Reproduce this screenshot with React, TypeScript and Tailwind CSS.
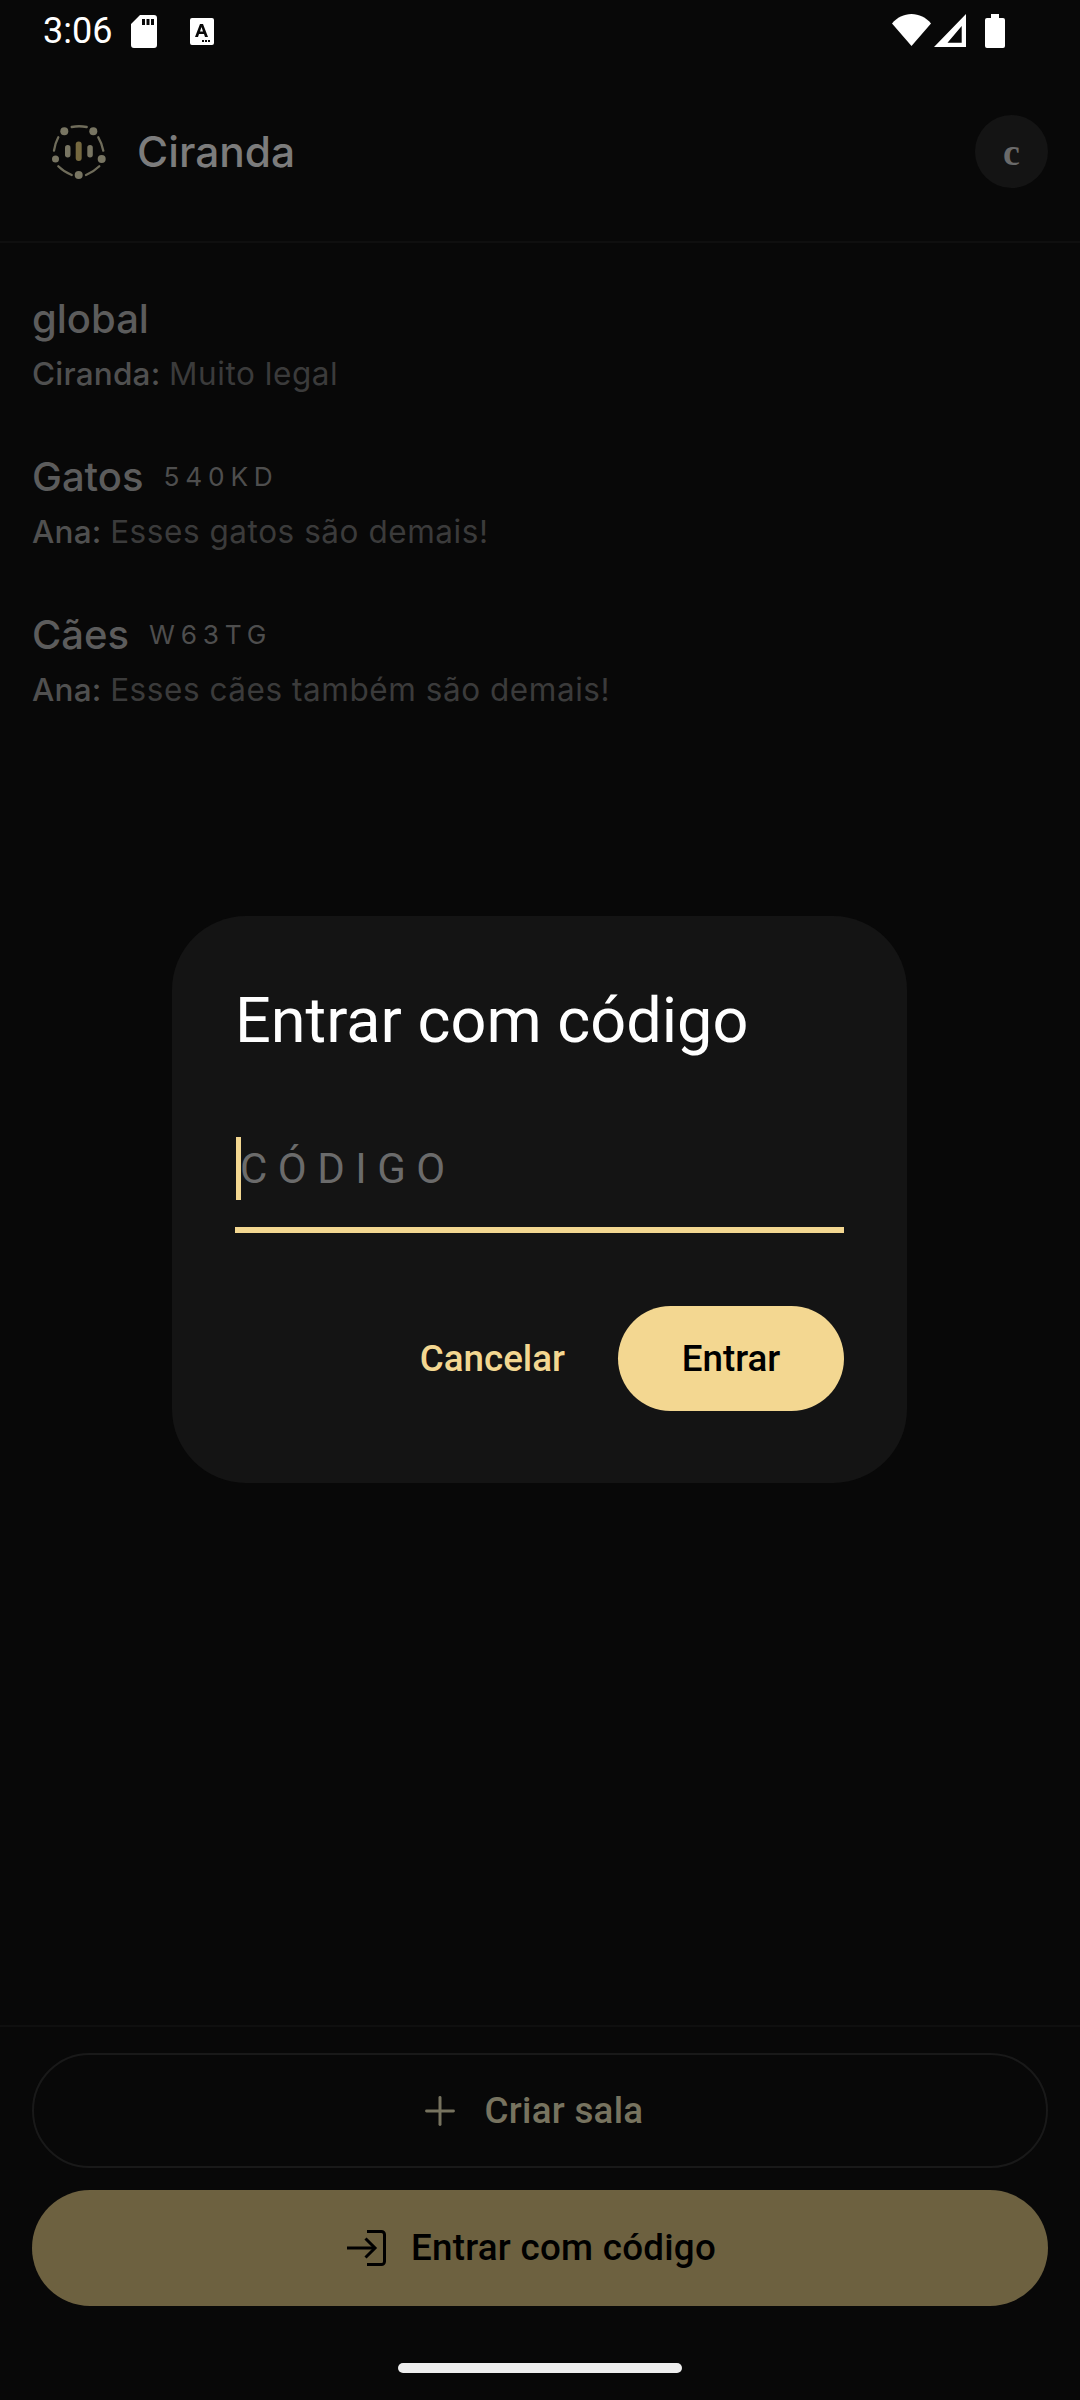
import { Plus } from 'lucide-react'

const inter = 'font-["Inter",sans-serif]'
const roboto = 'font-["Roboto",sans-serif]'

const rooms = [
  { name: 'global', code: '', author: 'Ciranda', text: 'Muito legal' },
  { name: 'Gatos', code: '540KD', author: 'Ana', text: 'Esses gatos são demais!' },
  { name: 'Cães', code: 'W63TG', author: 'Ana', text: 'Esses cães também são demais!' },
]

function StatusBar() {
  return (
    <div className="flex h-[62px] shrink-0 items-start justify-between pl-[43px] pr-[75px] pt-[14px] text-white">
      <div className="flex items-start">
        <span className={`${roboto} w-[88px] text-[36px] leading-[35px]`}>3:06</span>
        <svg width="26" height="33" viewBox="0 0 26 33" className="mt-[1px]">
          <path fill="#fff" fillRule="evenodd" d="M9 0h14a3 3 0 0 1 3 3v27a3 3 0 0 1-3 3H3a3 3 0 0 1-3-3V9ZM11 4v6h3V4Zm4.500 0v6h3V4ZM20 4v6h3V4Z" />
        </svg>
        <svg width="24" height="27" viewBox="0 0 24 27" className="ml-[33px] mt-[4px]">
          <path fill="#fff" fillRule="evenodd" d="M2 0h20a2 2 0 0 1 2 2v23a2 2 0 0 1-2 2H2a2 2 0 0 1-2-2V2a2 2 0 0 1 2-2Zm8 6-5 13h3l1-3h5l1 3h3L13 6Zm1.500 3 1.500 4.500h-3ZM12 22v2h2v-2Zm3 0v2h2v-2Zm3 0v2h2v-2Z" />
        </svg>
      </div>
      <div className="flex items-start">
        <svg width="39" height="32" viewBox="0 0 39 32">
          <path fill="#fff" d="M0 9.500C5 3.500 12 0 19.500 0S34 3.500 39 9.500L19.500 32Z" />
        </svg>
        <svg width="32" height="33" viewBox="0 0 32 33" className="ml-[3px]">
          <path fill="#fff" fillRule="evenodd" d="M32 0v33H0ZM27.700 12 13.500 28.700h14.200Z" />
        </svg>
        <svg width="20" height="34" viewBox="0 0 20 34" className="ml-[19px]">
          <path fill="#fff" d="M6 0h8v4h4a2 2 0 0 1 2 2v26a2 2 0 0 1-2 2H2a2 2 0 0 1-2-2V6a2 2 0 0 1 2-2h4Z" />
        </svg>
      </div>
    </div>
  )
}

function Logo() {
  return (
    <svg width="54" height="54" viewBox="0 0 54 54" className="shrink-0">
      <g fill="none" stroke="#6f6c5a" strokeWidth="2.300" strokeLinecap="round">
        <path d="M19.700 2Q27 0.500 34.700 2" />
        <path d="M6.300 12.300Q3 18.500 2 25.700" />
        <path d="M46.300 12.300Q50 18.500 51.300 25.700" />
        <path d="M6.300 41.300Q12 47 19.700 50" />
        <path d="M34 50Q41.500 47 47.300 41.300" />
      </g>
      <g fill="#787562">
        <circle cx="12.300" cy="6.300" r="4" />
        <circle cx="41.300" cy="6.300" r="4" />
        <circle cx="3.500" cy="34" r="3.500" />
        <circle cx="49.700" cy="34" r="4" />
        <circle cx="26.700" cy="50" r="4" />
        <rect x="13" y="20" width="5.500" height="12.500" rx="2.700" />
        <rect x="35.300" y="20" width="5.500" height="12.500" rx="2.700" />
      </g>
      <rect x="23.700" y="16.500" width="6" height="19.500" rx="3" fill="#75683f" />
    </svg>
  )
}

function Header() {
  return (
    <header className="flex h-[181px] shrink-0 items-center justify-between border-b-2 border-[#0f0f0f] pl-[52px] pr-[32px]">
      <div className="flex items-center gap-[31px]">
        <Logo />
        <span className={`${inter} text-[42.500px] font-medium text-[#7c7c7c]`}>Ciranda</span>
      </div>
      <div className="flex h-[73px] w-[73px] items-center justify-center rounded-full bg-[#141414]">
        <span className="font-['Liberation_Serif',serif] text-[38px] font-bold leading-none text-[#6a6a6a]">c</span>
      </div>
    </header>
  )
}

function RoomRow({ name, code, author, text }: (typeof rooms)[number]) {
  return (
    <div className="flex flex-col">
      <div className="flex h-[60px] items-center gap-[20px]">
        <span className={`${inter} text-[40px] font-medium text-[#5c5c5c]`}>{name}</span>
        {code && <span className={`${inter} text-[26.250px] tracking-[5.800px] text-[#4e4e4e]`}>{code}</span>}
      </div>
      <div className={`${inter} mt-[2px] text-[31.500px] leading-[46px] tracking-[0.55px]`}>
        <span className="font-medium tracking-[0.2px] text-[#505050]">{author}: </span>
        <span className="text-[#3b3b3b]">{text}</span>
      </div>
    </div>
  )
}

function BottomBar() {
  return (
    <div className="flex shrink-0 flex-col border-t-2 border-[#0f0f0f] px-[32px] pt-[26px]">
      <button className="flex h-[115px] items-center justify-center gap-[22px] rounded-full border-2 border-[#191919] pr-[20px]">
        <Plus size={46} strokeWidth={1.560} className="text-[#77735f]" />
        <span className={`${roboto} text-[36.750px] font-medium tracking-[0.26px] text-[#77735f]`}>Criar sala</span>
      </button>
      <button className="mt-[22px] flex h-[116px] items-center justify-center gap-[25px] rounded-full bg-[#6d6140] pr-[17px] text-black">
        <svg width="39" height="36" viewBox="0 0 39 36" fill="none" stroke="#000" strokeWidth="3">
          <path d="M20 1.500h14.500a3 3 0 0 1 3 3v27a3 3 0 0 1-3 3H20" />
          <path d="M0 18h27" />
          <path d="M18.500 8.500 28 18l-9.500 9.500" />
        </svg>
        <span className={`${roboto} text-[36.750px] font-medium tracking-[0.26px]`}>Entrar com código</span>
      </button>
      <div className="flex h-[94px] items-center justify-center pt-[30px]">
        <div className="h-[10px] w-[284px] rounded-full bg-[#eeeeee]" />
      </div>
    </div>
  )
}

function JoinDialog() {
  return (
    <div className="absolute left-[172px] top-[916px] flex h-[567px] w-[735px] flex-col rounded-[74px] bg-[#141414] px-[63px] pt-[67px]">
      <h2 className={`${roboto} text-[63px] leading-[76px] text-white`}>Entrar com código</h2>
      <div className="mt-[63px] flex h-[111px] items-start border-b-[6px] border-[#f3d791] pt-[15px]">
        <div className="ml-[1px] h-[63px] w-[5px] bg-[#f3d791]" />
        <span className={`${roboto} -ml-[1px] text-[42px] leading-[64px] tracking-[10.500px] text-[#6b6b6b]`}>CÓDIGO</span>
      </div>
      <div className="mt-[73px] flex items-center justify-end gap-[21px]">
        <button className={`${roboto} px-[32px] text-[36.750px] font-medium text-[#f3d791]`}>Cancelar</button>
        <button className={`${roboto} h-[105px] w-[226px] rounded-full bg-[#f3d791] text-[36.750px] font-medium text-black`}>Entrar</button>
      </div>
    </div>
  )
}

export default function App() {
  return (
    <div className="relative flex h-[2400px] w-[1080px] flex-col overflow-hidden bg-[#080808]">
      <StatusBar />
      <Header />
      <main className="flex flex-1 flex-col gap-[50px] pl-[32px] pt-[46px]">
        {rooms.map(r => <RoomRow key={r.name} {...r} />)}
      </main>
      <BottomBar />
      <JoinDialog />
    </div>
  )
}
